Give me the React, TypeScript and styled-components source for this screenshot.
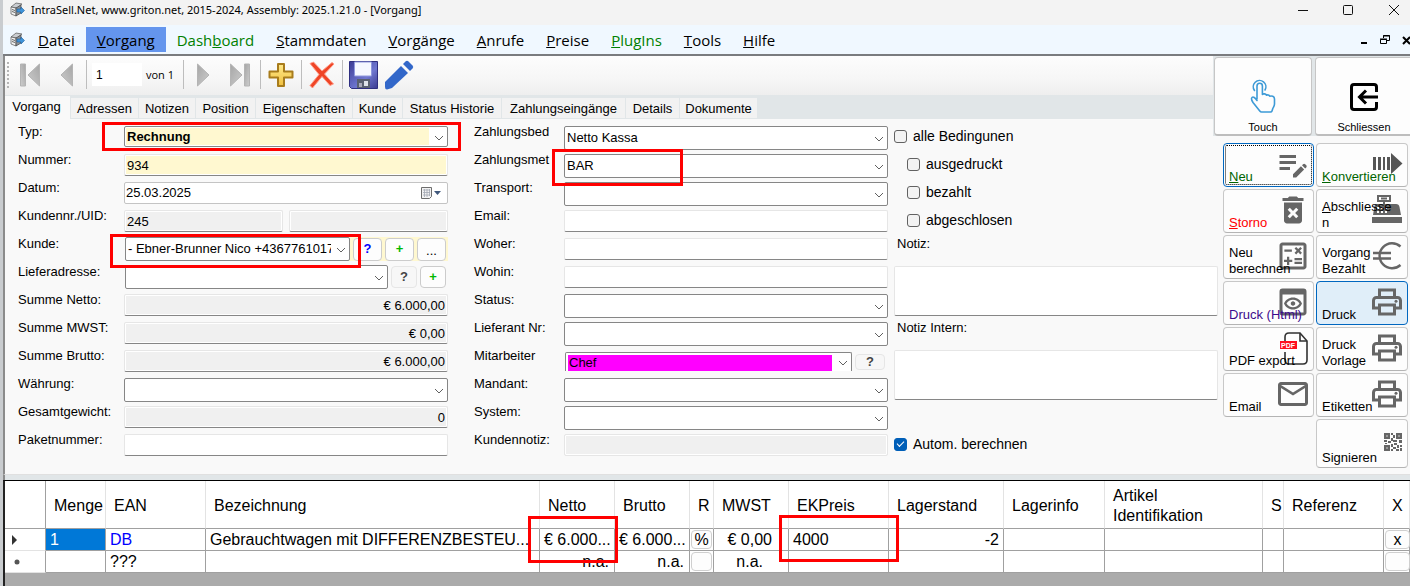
import React from "react";
import styled, { createGlobalStyle, css } from "styled-components";
import {
  MdDeleteForever,
  MdEditNote,
  MdMailOutline,
  MdOutlineCalculate,
  MdOutlinePreview,
  MdOutlinePrint,
} from "react-icons/md";

const colors = {
  strip: "#e1e6e8",
  panel: "#f9f9f9",
  line: "#868686",
  soft: "#e6e6e6",
  disabled: "#f0f0f0",
  yellow: "#fff8d0",
  icon: "#666666",
};

const uiFont = '"Liberation Sans", Arial, sans-serif';
const menuFont = '"Open Sans", "Noto Sans", sans-serif';

const GlobalStyle = createGlobalStyle`
  *, *::before, *::after { box-sizing: border-box; }
  body { margin: 0; background: #ababab; font-family: ${uiFont}; font-size: 13px; line-height: 16px; color: #000; overflow: hidden; }
  button, input, select, textarea { font: inherit; color: inherit; margin: 0; }
  svg { display: block; }
`;

/* ---------- window frame ---------- */

const Window = styled.div`
  display: flex;
  flex-direction: column;
  min-height: 100vh;
  border-left: 3px solid #c9cccf;
`;

const TitleBar = styled.header`
  display: flex;
  align-items: center;
  height: 25px;
  padding: 0 9px 6px 7px;
  gap: 6px;
  background: #f3f3f3;
  flex: none;
`;

const TitleText = styled.span`
  flex: 1;
  white-space: nowrap;
  font-size: 11px;
  font-family: "Noto Sans", sans-serif;
`;

const WindowControls = styled.div`
  display: flex;
  gap: 29px;
`;

const GlyphButton = styled.button`
  display: grid;
  place-items: center;
  padding: 0;
  border: 0;
  background: none;
`;

const MenuBar = styled.nav`
  display: flex;
  align-items: center;
  height: 31px;
  padding-left: 7px;
  background: #f0f8ff;
  border-bottom: 2px solid #7a7c7f;
  font-family: ${menuFont};
  font-size: 15px;
  flex: none;
`;

const MenuItem = styled.button<{ $active?: boolean; $green?: boolean }>`
  height: 25px;
  padding: 2px 11px 0;
  border: 0;
  background: ${(p) => (p.$active ? "#6495ed" : "transparent")};
  color: ${(p) => (p.$green ? "#008000" : "#000")};
  line-height: 23px;
  white-space: nowrap;
  &:first-of-type { margin-left: 2px; }
`;

const MenuControls = styled(WindowControls)`
  margin-left: auto;
  gap: 12px;
`;

const Main = styled.main`
  display: grid;
  grid-template-columns: minmax(0, 1fr) 10px 187px;
  grid-template-rows: 39px 24px 17px auto;
  border-left: 2px solid #8b8b8b;
  background: ${colors.panel};
  flex: none;
`;

/* ---------- record toolbar ---------- */

const Toolbar = styled.div`
  grid-area: 1 / 1;
  display: flex;
  align-items: center;
  padding: 0 0 2px 2px;
  background: linear-gradient(#fdfdfd, #f6f6f6 60%, #eeeeee);
`;

const Grip = styled.span`
  width: 5px;
  height: 26px;
  border-left: 2px dotted #b4b4b4;
`;

const ToolButton = styled.button`
  display: grid;
  place-items: center;
  width: 36px;
  height: 36px;
  padding: 0;
  border: 0;
  background: none;
`;

const Separator = styled.span`
  width: 1px;
  height: 29px;
  margin: 0 2px;
  background: #bdbdbd;
`;

const RecordInput = styled.input`
  width: 50px;
  height: 23px;
  margin-left: 3px;
  padding: 0 4px;
  border: 0;
  background: #fff;
  font-size: 12px;
`;

const RecordCount = styled.span`
  width: 39px;
  padding-left: 4px;
  font-family: ${menuFont};
  font-size: 11px;
`;

/* ---------- tabs ---------- */

const Tabs = styled.div`
  grid-area: 2 / 1;
  display: flex;
  align-items: flex-end;
  background: ${colors.strip};
`;

const Tab = styled.button<{ $w: number; $active?: boolean }>`
  width: ${(p) => p.$w}px;
  height: 20px;
  margin-bottom: 1px;
  padding: 1px 0 0;
  border: 0;
  border-right: 1px solid ${colors.strip};
  background: #f2f2f2;
  white-space: nowrap;
  ${(p) =>
    p.$active &&
    css`
      height: 23px;
      margin-bottom: 0;
      padding: 0 2px 2px 0;
      background: ${colors.panel};
    `}
`;

/* ---------- large buttons ---------- */

const LargeButtons = styled.div`
  grid-area: 1 / 2 / 4 / 4;
  display: grid;
  grid-template-columns: 98px 98px;
  gap: 3px;
  padding: 1px 0 0 1px;
  background: ${colors.strip};
  overflow: hidden;
  z-index: 1;
`;

const LargeButton = styled.button`
  display: flex;
  flex-direction: column;
  align-items: center;
  justify-content: flex-end;
  gap: 7px;
  padding: 0;
  border: 1px solid #c6c6c6;
  border-bottom: 2px solid #bdbdbd;
  border-radius: 4px;
  background: #fdfdfd;
  font-size: 11px;
  line-height: 14px;
`;

/* ---------- form ---------- */

const Form = styled.form`
  grid-area: 3 / 1 / 5 / 3;
  display: flex;
  padding: 5px 5px 14px 13px;
`;

const Group = styled.div<{ $label: number; $before?: number }>`
  flex: 1 1 ${(p) => p.$label}px;
  min-width: 0;
  margin-left: ${(p) => p.$before || 0}px;
  display: grid;
  grid-auto-rows: 28px;
  align-content: start;
`;

const Row = styled.div<{ $label: number }>`
  display: grid;
  grid-template-columns: ${(p) => p.$label}px minmax(0, 1fr);
  align-items: start;
`;

const Label = styled.label`
  white-space: nowrap;
`;

const Field = styled.div`
  position: relative;
  display: flex;
  gap: 6px;
  margin-top: 2px;
  min-width: 0;
`;

const ButtonField = styled(Field)<{ $yellow?: boolean }>`
  gap: 3px;
  margin-top: 1px;
  padding: 0 2px 0 1px;
  align-items: center;
  background: ${(p) =>
    p.$yellow
      ? `linear-gradient(to right, transparent 60%, ${colors.yellow} 0)`
      : "transparent"};
`;

const LowField = styled(ButtonField)`
  margin-top: 4px;
  padding-right: 3px;
`;

const TextInput = styled.input<{ $fill?: string; $right?: boolean }>`
  flex: 1;
  min-width: 0;
  width: 100%;
  height: 22px;
  padding: 0 2px;
  border: 1px solid ${colors.soft};
  border-bottom-color: ${colors.line};
  border-radius: 2px;
  box-shadow: inset 0 0 0 1px #fff;
  background: ${(p) => p.$fill || "#fff"};
  text-align: ${(p) => (p.$right ? "right" : "left")};
`;

const FaintInput = styled(TextInput)`
  border-bottom-color: ${colors.soft};
`;

const DateBox = styled.div`
  flex: 1;
  display: flex;
  align-items: center;
  height: 22px;
  padding-right: 5px;
  border: 1px solid #c4c4c4;
  border-radius: 2px;
  background: #fff;
`;

const DateInput = styled.input`
  flex: 1;
  min-width: 0;
  padding: 0 1px;
  border: 0;
  background: transparent;
`;

const ComboBox = styled.div<{ $h: number; $cut?: boolean }>`
  position: relative;
  flex: 1;
  min-width: 0;
  height: ${(p) => p.$h}px;
  padding: 1px;
  border: 1px solid ${colors.line};
  border-radius: 2px;
  background: #fff;
  ${(p) =>
    p.$cut &&
    css`
      padding: 2px 2px 0;
      border-bottom: 0;
      border-radius: 2px 2px 0 0;
    `}
  > svg {
    position: absolute;
    right: 3px;
    bottom: calc(50% - 4px);
    pointer-events: none;
  }
`;

const Select = styled.select<{ $fill?: string; $bold?: boolean }>`
  appearance: none;
  display: block;
  width: 100%;
  height: 100%;
  padding: 0 17px 0 1px;
  border: 0;
  outline: 0;
  background: linear-gradient(
    to right,
    ${(p) => p.$fill || "#fff"} calc(100% - 17px),
    #fff 0
  );
  font-weight: ${(p) => (p.$bold ? "bold" : "normal")};
`;

const SmallButton = styled.button<{ $w: number; $h: number; $color: string; $faint?: boolean; $plain?: boolean }>`
  flex: none;
  width: ${(p) => p.$w}px;
  height: ${(p) => p.$h}px;
  padding: ${(p) => (p.$plain ? "3px 0 0" : "0")};
  border: 1px solid ${(p) => (p.$faint ? "#e6e6e6" : "#cccccc")};
  border-radius: 4px;
  background: ${(p) => (p.$faint ? "#f7f7f7" : "#fdfdfd")};
  color: ${(p) => p.$color};
  font-weight: ${(p) => (p.$plain ? "normal" : "bold")};
  line-height: 14px;
`;

const Highlight = styled.span<{ $inset: string; $width?: number }>`
  position: absolute;
  inset: ${(p) => p.$inset};
  width: ${(p) => (p.$width ? `${p.$width}px` : "auto")};
  border: 3px solid #ff0000;
  pointer-events: none;
  z-index: 2;
`;

const CheckRow = styled.label<{ $indent?: boolean }>`
  display: flex;
  align-items: center;
  gap: 6px;
  height: 24px;
  padding-left: ${(p) => (p.$indent ? 13 : 0)}px;
  font-size: 14px;
  white-space: nowrap;
`;

const CheckBox = styled.input`
  appearance: none;
  display: grid;
  place-items: center;
  width: 13px;
  height: 13px;
  border: 1px solid #626262;
  border-radius: 3px;
  background: #f3f3f3;
  &:checked { border-color: #005fb8; background: #005fb8; }
  &:checked::after {
    content: "";
    width: 7px;
    height: 4px;
    margin-bottom: 2px;
    border: solid #fff;
    border-width: 0 0 1px 1px;
    transform: rotate(-45deg);
  }
`;

const NoteLabel = styled.label`
  padding-left: 3px;
`;

const NoteArea = styled.textarea`
  grid-row: span 2;
  width: 100%;
  height: 50px;
  margin-top: 2px;
  border: 1px solid ${colors.soft};
  border-bottom-color: ${colors.line};
  border-radius: 2px;
  background: #fff;
  resize: none;
`;

const AutoCheck = styled(CheckRow)`
  grid-row: 12;
`;

/* ---------- action buttons ---------- */

const Actions = styled.aside`
  grid-area: 4 / 3;
  display: grid;
  grid-template-columns: 91px 92px;
  grid-auto-rows: 44px;
  gap: 2px;
  padding-top: 7px;
  align-content: start;
`;

const ActionButton = styled.button<{ $color?: string; $state?: "focus" | "hot"; $tall?: boolean; $last?: boolean }>`
  display: grid;
  height: ${(p) => (p.$tall ? 49 : 44)}px;
  padding: 2px 2px 1px 5px;
  border: 1px solid #c8c8c8;
  border-bottom-color: #b4b4b4;
  border-radius: 4px;
  background: #fdfdfd;
  color: ${(p) => p.$color || "#000"};
  text-align: left;
  ${(p) => p.$last && css`grid-column: 2;`}
  ${(p) =>
    p.$state &&
    css`
      border-color: #0067c0;
    `}
  ${(p) => p.$state === "hot" && css`background: #e0eef9;`}
  ${(p) =>
    p.$state === "focus" &&
    css`
      outline: 1px dotted #000;
      outline-offset: -3px;
    `}
`;

const ActionIcon = styled.span`
  grid-area: 1 / 1;
  justify-self: end;
  align-self: start;
  height: 36px;
  color: ${colors.icon};
`;

const ActionText = styled.span`
  grid-area: 1 / 1;
  align-self: end;
  padding-right: 8px;
  overflow-wrap: anywhere;
  z-index: 1;
`;

/* ---------- positions table ---------- */

const Divider = styled.div`
  height: 6px;
  border-left: 2px solid #8b8b8b;
  border-top: 1px solid #e0e0e0;
  background: ${colors.strip};
  flex: none;
`;

const GridArea = styled.section`
  flex: 1;
  border-top: 1px solid #000;
  border-left: 2px solid #222;
  background: #ababab;
  overflow: hidden;
`;

const Table = styled.table`
  width: 100%;
  table-layout: fixed;
  border-collapse: separate;
  border-spacing: 0;
  background: #fff;
  font-size: 16px;
  line-height: 20px;
`;

const Th = styled.th`
  height: 48px;
  padding: 2px 0 0 8px;
  border-right: 1px solid #e3e3e3;
  border-bottom: 1px solid #a0a0a0;
  font-weight: normal;
  text-align: left;
  white-space: pre-line;
  &:first-child { border-right-color: #a0a0a0; }
`;

const Td = styled.td<{ $right?: boolean; $pad?: number; $color?: string; $fill?: string; $head?: boolean }>`
  position: relative;
  height: 22px;
  padding: 1px ${(p) => p.$pad ?? 4}px 0 4px;
  border-right: 1px solid #a0a0a0;
  border-bottom: 1px solid ${(p) => (p.$head ? "#e3e3e3" : "#a0a0a0")};
  background: ${(p) => p.$fill || "#fff"};
  color: ${(p) => p.$color || "#000"};
  text-align: ${(p) => (p.$right ? "right" : "left")};
  white-space: nowrap;
`;

const Clip = styled.span`
  display: block;
  overflow: hidden;
`;

const ButtonCell = styled(Td)`
  padding: 1px;
`;

const CellButton = styled.button<{ $w: number }>`
  display: block;
  width: ${(p) => p.$w}px;
  height: 19px;
  padding: 0;
  border: 1px solid #cfcfcf;
  border-radius: 4px;
  background: #fdfdfd;
  line-height: 17px;
`;

/* ---------- drawings ---------- */

const AppIcon = () => (
  <svg width="15" height="15" viewBox="0 0 15 15">
    <path d="M1 5 6 1l6 1-5 4z" fill="#c9ccd0" stroke="#555" strokeWidth=".7" />
    <path d="M1 5v7l5 2V6z" fill="#f1f1f1" stroke="#555" strokeWidth=".7" />
    <path d="M6 6v8l5-3V3z" fill="#8b9096" stroke="#444" strokeWidth=".7" />
    <path d="M2 7.500 5 8.500M2 9.500l3 1" stroke="#444" strokeWidth=".8" />
    <path d="M7 7h4V5l3.500 3.500L11 12v-2H7z" fill="#3f93d8" stroke="#1b5f9e" strokeWidth=".6" />
  </svg>
);

const Chevron = () => (
  <svg width="10" height="6" viewBox="0 0 10 6" fill="none" stroke="#606060">
    <path d="M1 1l4 4 4-4" />
  </svg>
);

const NavIcon = ({ back, end }: { back?: boolean; end?: boolean }) => (
  <svg width="24" height="26" viewBox="0 0 24 26">
    <defs>
      <linearGradient id="navGrey" x1="0" y1="0" x2="1" y2="1">
        <stop offset="0" stopColor="#a6a6a6" />
        <stop offset="1" stopColor="#cdcdcd" />
      </linearGradient>
    </defs>
    <g fill="url(#navGrey)" stroke="#b4b4b4" transform={back ? "matrix(-1 0 0 1 24 0)" : undefined}>
      <path d={end ? "M2.500 2 14 13 2.500 24z" : "M5.500 2 17 13 5.500 24z"} />
      {end && <path d="M16.500 2h5v22h-5z" />}
    </g>
  </svg>
);

const PlusIcon = () => (
  <svg width="26" height="26" viewBox="0 0 26 26">
    <defs>
      <linearGradient id="gold" x1="0" y1="0" x2="0" y2="1">
        <stop offset="0" stopColor="#ffe98a" />
        <stop offset="1" stopColor="#f0c040" />
      </linearGradient>
    </defs>
    <path d="M10 2h6v7.500h8.500v6H16V24h-6v-8.500H1.500v-6H10z" fill="url(#gold)" stroke="#a87c1c" strokeWidth="2" strokeLinejoin="round" />
  </svg>
);

const CrossIcon = () => (
  <svg width="28" height="28" viewBox="0 0 28 28">
    <path d="M2 2.500l3.500-1.500 8.500 9L24 1.500l2 1.500-9.500 10 9 10-3.500 1.500-8-9L4.500 27 2 24.500l9-11z" fill="#ef4526" stroke="#ff9a86" strokeWidth="1" />
  </svg>
);

const SaveIcon = () => (
  <svg width="29" height="28" viewBox="0 0 29 28">
    <defs>
      <linearGradient id="disk" x1="0" y1="0" x2="1" y2="1">
        <stop offset="0" stopColor="#3c3c96" />
        <stop offset=".6" stopColor="#6f77d0" />
        <stop offset="1" stopColor="#3a3a90" />
      </linearGradient>
    </defs>
    <path d="M.5.500h28v27h-26l-2-2z" fill="url(#disk)" stroke="#2f2f80" />
    <path d="M5.500 1h17v14h-17z" fill="#f5f8ff" stroke="#8f98dd" />
    <path d="M8 18h13v9H8z" fill="#596070" />
    <path d="M15 20h4v5h-4z" fill="#dfe3ea" />
    <path d="M10 22h3v4h-3z" fill="#aab" />
  </svg>
);

const PencilIcon = () => (
  <svg width="30" height="30" viewBox="0 0 30 30" fill="#3267c9">
    <path d="M1 22 17 6l7 7L8 28l-5 1.500Q1 29.500 1 27z" />
    <path d="M19 4l2.500-2.500q1.500-1.500 3 0l4 4q1.500 1.500 0 3L26 11z" />
  </svg>
);

const CalendarIcon = () => (
  <svg width="22" height="14" viewBox="0 0 22 14">
    <path d="M1.500 1.500h10v9l-2 2h-8z" fill="#f2f2f2" stroke="#6d6d6d" />
    <path d="M3 4h7M3 6.500h7M3 9h7M4.500 3v8M7 3v8M9.500 3v7" stroke="#a3a8b4" strokeWidth=".8" />
    <path d="M14 5h7l-3.500 4z" fill="#40587c" />
  </svg>
);

const TouchIcon = () => (
  <svg width="26" height="34" viewBox="0 0 26 34" fill="none" stroke="#3d9ad6" strokeWidth="1.600" strokeLinejoin="round" strokeLinecap="round">
    <path d="M4.500 11.500A6.300 6.300 0 1 1 15 11" />
    <path d="M7 20V7a2.700 2.700 0 0 1 5.400 0v8.500c1-1 3.200-.8 4 .7 1.200-.7 2.700-.2 3.300 1 1.800-.6 4.800 0 4.800 2.800v5c0 2-1 3-1.700 4.500L22 32q-.3 1-1.500 1h-9q-1 0-1.700-1L3 23.500q-2.500-4-.8-5.200T7 21.500" />
  </svg>
);

const ExitIcon = () => (
  <svg width="28" height="32" viewBox="0 -2 28 32" fill="none" stroke="#000" strokeWidth="3">
    <path d="M26.500 9V4q0-2.500-2.500-2.500H4Q1.500 1.500 1.500 4v20q0 2.500 2.500 2.500h20q2.500 0 2.500-2.500v-5" />
    <path d="M28 14H10M16 7.500 9.500 14l6.500 6.500" />
  </svg>
);

const ConvertIcon = () => (
  <svg width="36" height="36" viewBox="0 0 36 36" fill="#555">
    <path d="M4 11h3v13H4zM9 11h3v13H9zM14 11h2v13h-2zM18 11h3v13h-3zM22 7l11.500 10.500L22 28z" />
  </svg>
);

const RegisterIcon = () => (
  <svg width="36" height="36" viewBox="0 0 36 36">
    <path d="M9 4h12v5H9z" fill="#fdfdfd" stroke="#666" strokeWidth="2" />
    <path d="M12 6.500h6M15 9v4" stroke="#666" strokeWidth="2" />
    <path d="M7 12h20q3 0 3.500 3L32 23H4l1.500-9Q6 12 7 12z" fill="#666" />
    <path d="M8 16h2M12 16h2M16 16h2M8 20h2M12 20h2M16 20h2" stroke="#fdfdfd" strokeWidth="2" />
    <path d="M3 25h30v6H3z" fill="#666" />
  </svg>
);

const EuroIcon = () => (
  <svg width="36" height="36" viewBox="0 0 36 36" fill="none" stroke="#666" strokeWidth="2.400">
    <path d="M31.500 8.500A12.500 12.500 0 1 0 31.500 27M4 15h18M4 20.500h18" />
  </svg>
);

const PdfIcon = () => (
  <svg width="36" height="36" viewBox="0 0 36 36">
    <path d="M10 13V7q0-4 4-4h11l7 8v19q0 4-4 4H14q-4 0-4-4v-8" fill="#fff" stroke="#333" strokeWidth="1.600" />
    <path d="M25 3v8h7" fill="none" stroke="#333" strokeWidth="1.600" />
    <path d="M5 11h17v8H5z" fill="#ff1020" />
    <text x="6" y="18" fontSize="7" fontWeight="bold" fill="#fff" fontFamily={uiFont}>PDF</text>
  </svg>
);

const QrIcon = () => (
  <svg width="22" height="36" viewBox="1 0 22 36" fill="#666">
    <path d="M2 11h6v6H2zM14 11h6v6h-6zM2 23h6v6H2zM9 11h2v2H9zM11 13h2v3h-2zM9 16h2v3H9zM2 18h3v2H2zM6 19h3v2H6zM11 18h4v2h-4zM17 18h3v3h-3zM9 22h2v3H9zM12 21h3v2h-3zM11 25h3v2h-3zM9 27h2v2H9zM15 23h2v3h-2zM18 23h2v2h-2zM14 27h3v2h-3zM18 26h2v3h-2zM3 21h2v1H3z" />
    <path d="M4 13h2v2H4zM16 13h2v2h-2zM4 25h2v2H4z" fill="#999" />
  </svg>
);

/* ---------- composed parts ---------- */

const Hotkey = ({ text, at = 0 }: { text: string; at?: number }) => (
  <>
    {text.slice(0, at)}
    <u>{text[at]}</u>
    {text.slice(at + 1)}
  </>
);

type ComboProps = { id: string; value?: string; h?: number; fill?: string; bold?: boolean; cut?: boolean };

const Combo = ({ id, value = "", h = 24, fill, bold, cut }: ComboProps) => (
  <ComboBox $h={h} $cut={cut}>
    <Select id={id} defaultValue={value} $fill={fill} $bold={bold}>
      <option value={value}>{value}</option>
    </Select>
    <Chevron />
  </ComboBox>
);

const LEFT = 106;
const MIDDLE = 90;

type LineProps = { w: number; id: string; label: string; children: React.ReactNode };

const Line = ({ w, id, label, children }: LineProps) => (
  <Row $label={w}>
    <Label htmlFor={id}>{label}</Label>
    {children}
  </Row>
);

const menu = [
  { text: "Datei" },
  { text: "Vorgang", active: true },
  { text: "Dashboard", green: true, at: 4 },
  { text: "Stammdaten" },
  { text: "Vorgänge" },
  { text: "Anrufe" },
  { text: "Preise" },
  { text: "PlugIns", green: true },
  { text: "Tools" },
  { text: "Hilfe" },
];

const tabs: [string, number][] = [
  ["Vorgang", 66],
  ["Adressen", 68],
  ["Notizen", 57],
  ["Position", 60],
  ["Eigenschaften", 97],
  ["Kunde", 50],
  ["Status Historie", 99],
  ["Zahlungseingänge", 124],
  ["Details", 54],
  ["Dokumente", 78],
];

const sums = [
  ["netto", "Summe Netto:", "€ 6.000,00"],
  ["mwst", "Summe MWST:", "€ 0,00"],
  ["brutto", "Summe Brutto:", "€ 6.000,00"],
];

const columns: [string, number | undefined][] = [
  ["", 41],
  ["Menge", 60],
  ["EAN", 100],
  ["Bezeichnung", undefined],
  ["Netto", 75],
  ["Brutto", 75],
  ["R", 24],
  ["MWST", 75],
  ["EKPreis", 100],
  ["Lagerstand", 115],
  ["Lagerinfo", 101],
  ["Artikel\nIdentifikation", 158],
  ["S", 21],
  ["Referenz", 100],
  ["X", 26],
];

export default function App() {
  return (
    <Window>
      <GlobalStyle />
      <TitleBar>
        <AppIcon />
        <TitleText>IntraSell.Net, www.griton.net, 2015-2024, Assembly: 2025.1.21.0 - [Vorgang]</TitleText>
        <WindowControls>
          <GlyphButton aria-label="Minimieren">
            <svg width="16" height="12" viewBox="0 0 16 12" stroke="#111"><path d="M3 6.500h10" /></svg>
          </GlyphButton>
          <GlyphButton aria-label="Maximieren">
            <svg width="16" height="12" viewBox="0 0 16 12" fill="none" stroke="#111"><rect x="3.500" y="1.500" width="9" height="9" rx="1" /></svg>
          </GlyphButton>
          <GlyphButton aria-label="Schließen">
            <svg width="16" height="12" viewBox="0 0 16 12" stroke="#111"><path d="M4 1l10 10M14 1 4 11" /></svg>
          </GlyphButton>
        </WindowControls>
      </TitleBar>

      <MenuBar>
        <AppIcon />
        {menu.map((m) => (
          <MenuItem key={m.text} $active={m.active} $green={m.green}>
            <Hotkey text={m.text} at={m.at} />
          </MenuItem>
        ))}
        <MenuControls>
          <GlyphButton aria-label="Fenster minimieren">
            <svg width="8" height="10" viewBox="0 0 8 10" stroke="#000" strokeWidth="2"><path d="M1 8h6" /></svg>
          </GlyphButton>
          <GlyphButton aria-label="Fenster wiederherstellen">
            <svg width="10" height="10" viewBox="0 0 10 10" fill="none" stroke="#000">
              <path d="M3.500 3V.500h6v5H7M3 1h7M.5 4.500h6v4h-6zM0 4h7" />
            </svg>
          </GlyphButton>
          <GlyphButton aria-label="Fenster schließen">
            <svg width="8" height="10" viewBox="0 0 8 10" stroke="#000" strokeWidth="2"><path d="M1 2l7 7M8 2 1 9" /></svg>
          </GlyphButton>
        </MenuControls>
      </MenuBar>

      <Main>
        <Toolbar>
          <Grip />
          <ToolButton aria-label="Erster"><NavIcon back end /></ToolButton>
          <ToolButton aria-label="Zurück"><NavIcon back /></ToolButton>
          <Separator />
          <RecordInput aria-label="Datensatz" defaultValue="1" />
          <RecordCount>von 1</RecordCount>
          <Separator />
          <ToolButton aria-label="Weiter"><NavIcon /></ToolButton>
          <ToolButton aria-label="Letzter"><NavIcon end /></ToolButton>
          <Separator />
          <ToolButton aria-label="Hinzufügen"><PlusIcon /></ToolButton>
          <Separator />
          <ToolButton aria-label="Löschen"><CrossIcon /></ToolButton>
          <Separator />
          <ToolButton aria-label="Speichern"><SaveIcon /></ToolButton>
          <ToolButton aria-label="Bearbeiten"><PencilIcon /></ToolButton>
        </Toolbar>

        <Tabs>
          {tabs.map(([text, w], i) => (
            <Tab key={text} $w={w} $active={i === 0}>{text}</Tab>
          ))}
        </Tabs>

        <LargeButtons>
          <LargeButton><TouchIcon />Touch</LargeButton>
          <LargeButton><ExitIcon />Schliessen</LargeButton>
        </LargeButtons>

        <Form onSubmit={(e) => e.preventDefault()}>
          <Group $label={LEFT}>
            <Line w={LEFT} id="typ" label="Typ:">
              <Field>
                <Combo id="typ" value="Rechnung" h={21} fill={colors.yellow} bold />
                <Highlight $inset="-4px -13px -4px -22px" />
              </Field>
            </Line>
            <Line w={LEFT} id="nummer" label="Nummer:">
              <Field><TextInput id="nummer" defaultValue="934" $fill={colors.yellow} /></Field>
            </Line>
            <Line w={LEFT} id="datum" label="Datum:">
              <Field>
                <DateBox>
                  <DateInput id="datum" defaultValue="25.03.2025" />
                  <GlyphButton type="button" aria-label="Kalender"><CalendarIcon /></GlyphButton>
                </DateBox>
              </Field>
            </Line>
            <Line w={LEFT} id="kundennr" label="Kundennr./UID:">
              <Field>
                <TextInput id="kundennr" defaultValue="245" readOnly $fill={colors.disabled} />
                <TextInput aria-label="UID" readOnly $fill={colors.disabled} />
              </Field>
            </Line>
            <Line w={LEFT} id="kunde" label="Kunde:">
              <ButtonField $yellow>
                <Combo id="kunde" value="- Ebner-Brunner Nico +4367761017" />
                <SmallButton type="button" $w={29} $h={23} $color="#0000ff">?</SmallButton>
                <SmallButton type="button" $w={29} $h={23} $color="#00b800">+</SmallButton>
                <SmallButton type="button" $w={29} $h={23} $color="#000" $plain>...</SmallButton>
                <Highlight $inset="-3px 87px -7px -14px" />
              </ButtonField>
            </Line>
            <Line w={LEFT} id="lieferadresse" label="Lieferadresse:">
              <ButtonField>
                <Combo id="lieferadresse" />
                <SmallButton type="button" $w={26} $h={22} $color="#444" $faint>?</SmallButton>
                <SmallButton type="button" $w={26} $h={22} $color="#00b800">+</SmallButton>
              </ButtonField>
            </Line>
            {sums.map(([id, label, value]) => (
              <Line key={id} w={LEFT} id={id} label={label}>
                <Field><TextInput id={id} defaultValue={value} readOnly $right $fill={colors.disabled} /></Field>
              </Line>
            ))}
            <Line w={LEFT} id="waehrung" label="Währung:">
              <Field><Combo id="waehrung" /></Field>
            </Line>
            <Line w={LEFT} id="gewicht" label="Gesamtgewicht:">
              <Field><TextInput id="gewicht" defaultValue="0" readOnly $right $fill={colors.disabled} /></Field>
            </Line>
            <Line w={LEFT} id="paket" label="Paketnummer:">
              <Field><TextInput id="paket" /></Field>
            </Line>
          </Group>

          <Group $label={MIDDLE} $before={26}>
            <Line w={MIDDLE} id="zbed" label="Zahlungsbed">
              <Field><Combo id="zbed" value="Netto Kassa" /></Field>
            </Line>
            <Line w={MIDDLE} id="zmet" label="Zahlungsmet">
              <Field>
                <Combo id="zmet" value="BAR" />
                <Highlight $inset="-5px auto -8px -12px" $width={131} />
              </Field>
            </Line>
            <Line w={MIDDLE} id="transport" label="Transport:">
              <Field><Combo id="transport" /></Field>
            </Line>
            <Line w={MIDDLE} id="email" label="Email:">
              <Field><TextInput id="email" /></Field>
            </Line>
            <Line w={MIDDLE} id="woher" label="Woher:">
              <Field><TextInput id="woher" /></Field>
            </Line>
            <Line w={MIDDLE} id="wohin" label="Wohin:">
              <Field><TextInput id="wohin" /></Field>
            </Line>
            <Line w={MIDDLE} id="status" label="Status:">
              <Field><Combo id="status" /></Field>
            </Line>
            <Line w={MIDDLE} id="lieferant" label="Lieferant Nr:">
              <Field><Combo id="lieferant" /></Field>
            </Line>
            <Line w={MIDDLE} id="mitarbeiter" label="Mitarbeiter">
              <LowField>
                <Combo id="mitarbeiter" value="Chef" h={19} fill="#ff00ff" cut />
                <SmallButton type="button" $w={30} $h={16} $color="#444" $faint>?</SmallButton>
              </LowField>
            </Line>
            <Line w={MIDDLE} id="mandant" label="Mandant:">
              <Field><Combo id="mandant" /></Field>
            </Line>
            <Line w={MIDDLE} id="system" label="System:">
              <Field><Combo id="system" /></Field>
            </Line>
            <Line w={MIDDLE} id="kundennotiz" label="Kundennotiz:">
              <Field><FaintInput id="kundennotiz" readOnly $fill={colors.disabled} /></Field>
            </Line>
          </Group>

          <Group $label={0} $before={6}>
            <CheckRow><CheckBox type="checkbox" />alle Bedingunen</CheckRow>
            <CheckRow $indent><CheckBox type="checkbox" />ausgedruckt</CheckRow>
            <CheckRow $indent><CheckBox type="checkbox" />bezahlt</CheckRow>
            <CheckRow $indent><CheckBox type="checkbox" />abgeschlosen</CheckRow>
            <NoteLabel htmlFor="notiz">Notiz:</NoteLabel>
            <NoteArea id="notiz" />
            <NoteLabel htmlFor="intern">Notiz Intern:</NoteLabel>
            <NoteArea id="intern" />
            <AutoCheck><CheckBox type="checkbox" defaultChecked />Autom. berechnen</AutoCheck>
          </Group>
        </Form>

        <Actions>
          <ActionButton $color="#006400" $state="focus">
            <ActionIcon><MdEditNote size={36} /></ActionIcon>
            <ActionText><Hotkey text="Neu" /></ActionText>
          </ActionButton>
          <ActionButton $color="#006400">
            <ActionIcon><ConvertIcon /></ActionIcon>
            <ActionText><Hotkey text="Konvertieren" /></ActionText>
          </ActionButton>
          <ActionButton $color="#ff0000">
            <ActionIcon><MdDeleteForever size={36} /></ActionIcon>
            <ActionText><Hotkey text="Storno" /></ActionText>
          </ActionButton>
          <ActionButton>
            <ActionIcon><RegisterIcon /></ActionIcon>
            <ActionText><Hotkey text="Abschliessen" /></ActionText>
          </ActionButton>
          <ActionButton>
            <ActionIcon><MdOutlineCalculate size={36} /></ActionIcon>
            <ActionText>Neu berechnen</ActionText>
          </ActionButton>
          <ActionButton>
            <ActionIcon><EuroIcon /></ActionIcon>
            <ActionText>Vorgang Bezahlt</ActionText>
          </ActionButton>
          <ActionButton $color="#3c0a8c">
            <ActionIcon><MdOutlinePreview size={36} /></ActionIcon>
            <ActionText>Druck (Html)</ActionText>
          </ActionButton>
          <ActionButton $state="hot">
            <ActionIcon><MdOutlinePrint size={36} /></ActionIcon>
            <ActionText>Druck</ActionText>
          </ActionButton>
          <ActionButton>
            <ActionIcon><PdfIcon /></ActionIcon>
            <ActionText>PDF export</ActionText>
          </ActionButton>
          <ActionButton>
            <ActionIcon><MdOutlinePrint size={36} /></ActionIcon>
            <ActionText>Druck Vorlage</ActionText>
          </ActionButton>
          <ActionButton>
            <ActionIcon><MdMailOutline size={36} /></ActionIcon>
            <ActionText>Email</ActionText>
          </ActionButton>
          <ActionButton>
            <ActionIcon><MdOutlinePrint size={36} /></ActionIcon>
            <ActionText>Etiketten</ActionText>
          </ActionButton>
          <ActionButton $tall $last>
            <ActionIcon><QrIcon /></ActionIcon>
            <ActionText>Signieren</ActionText>
          </ActionButton>
        </Actions>
      </Main>

      <Divider />
      <GridArea>
        <Table>
          <colgroup>
            {columns.map(([text, w]) => (
              <col key={text} width={w} />
            ))}
          </colgroup>
          <thead>
            <tr>
              {columns.map(([text]) => (
                <Th key={text} scope="col">{text}</Th>
              ))}
            </tr>
          </thead>
          <tbody>
            <tr>
              <Td $head>
                <svg width="10" height="10" viewBox="0 0 10 10" fill="#333"><path d="M3 0l5 5-5 5z" /></svg>
              </Td>
              <Td $fill="#0078d7" $color="#fff">1</Td>
              <Td $color="#0000ff">DB</Td>
              <Td><Clip>Gebrauchtwagen mit DIFFERENZBESTEU...</Clip></Td>
              <Td $right $pad={5}>
                € 6.000...
                <Highlight $inset="-13px -4px -13px -12px" />
              </Td>
              <Td $right $pad={5}>€ 6.000...</Td>
              <ButtonCell><CellButton $w={21}>%</CellButton></ButtonCell>
              <Td $right $pad={16}>€ 0,00</Td>
              <Td>
                4000
                <Highlight $inset="-14px -11px -12px -10px" />
              </Td>
              <Td $right>-2</Td>
              <Td />
              <Td />
              <Td />
              <Td />
              <ButtonCell><CellButton $w={25}>x</CellButton></ButtonCell>
            </tr>
            <tr>
              <Td $head>
                <svg width="14" height="10" viewBox="0 0 14 10"><circle cx="8" cy="5" r="2.500" fill="#555" /></svg>
              </Td>
              <Td />
              <Td>???</Td>
              <Td />
              <Td $right $pad={5}>n.a.</Td>
              <Td $right $pad={5}>n.a.</Td>
              <ButtonCell><CellButton $w={21} aria-label="Rabatt" /></ButtonCell>
              <Td $right $pad={25}>n.a.</Td>
              <Td />
              <Td />
              <Td />
              <Td />
              <Td />
              <Td />
              <ButtonCell><CellButton $w={25} aria-label="Entfernen" /></ButtonCell>
            </tr>
          </tbody>
        </Table>
      </GridArea>
    </Window>
  );
}
